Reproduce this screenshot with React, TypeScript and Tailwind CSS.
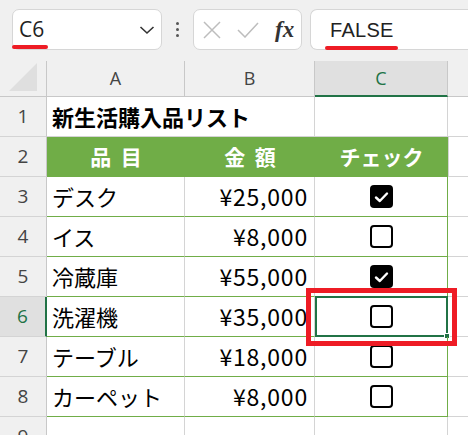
import React from "react";

const jp = { fontFamily: '"Noto Sans CJK JP", "Noto Sans", sans-serif' };
const ui = { fontFamily: '"Open Sans", "Liberation Sans", sans-serif' };

type Item = { name: string; price: string; checked: boolean };

const items: Item[] = [
  { name: "デスク", price: "¥25,000", checked: true },
  { name: "イス", price: "¥8,000", checked: false },
  { name: "冷蔵庫", price: "¥55,000", checked: true },
  { name: "洗濯機", price: "¥35,000", checked: false },
  { name: "テーブル", price: "¥18,000", checked: false },
  { name: "カーペット", price: "¥8,000", checked: false },
];

function CheckBox({ checked }: { checked: boolean }) {
  if (checked) {
    return (
      <div className="w-[23px] h-[23px] rounded-[4px] bg-black flex items-center justify-center">
        <svg width="15" height="12" viewBox="0 0 15 12">
          <path d="M2 6.5 L5.8 10 L13 2.5" fill="none" stroke="white" strokeWidth="2.4" strokeLinecap="round" strokeLinejoin="round" />
        </svg>
      </div>
    );
  }
  return <div className="w-[23px] h-[23px] rounded-[4px] border-2 border-black bg-white" />;
}

function RowHead({ n, active }: { n: number; active?: boolean }) {
  return (
    <div
      style={ui}
      className={
        "w-[47px] shrink-0 flex items-center justify-center text-[19px] border-b border-[#d4d4d4] " +
        (active
          ? "bg-[#e0e0e0] text-[#217346] border-r-2 border-r-[#217346]"
          : "bg-[#f0f0f0] text-[#444] border-r border-r-[#c8c8c8]")
      }
    >
      {n}
    </div>
  );
}

export default function App() {
  return (
    <div className="relative w-[468px] h-[435px] overflow-hidden bg-white">
      {/* toolbar: name box + formula bar */}
      <div className="h-[61px] bg-[#f0f0f0] flex items-start pt-[9px] pl-[12px] gap-0">
        <div className="w-[150px] h-[41px] bg-white border border-[#d6d6d6] rounded-[7px] flex items-center justify-between pl-[6px] pr-[6px]">
          <span style={ui} className="text-[21px] text-[#222] leading-none">C6</span>
          <svg width="16" height="10" viewBox="0 0 16 10">
            <path d="M1.5 2 L8 8 L14.5 2" fill="none" stroke="#333" strokeWidth="1.6" />
          </svg>
        </div>
        <div className="w-[31px] h-[41px] flex flex-col items-center justify-center gap-[3px]">
          <div className="w-[3px] h-[3px] bg-[#555] rounded-full" />
          <div className="w-[3px] h-[3px] bg-[#555] rounded-full" />
          <div className="w-[3px] h-[3px] bg-[#555] rounded-full" />
        </div>
        <div className="w-[109px] h-[41px] bg-white border border-[#d6d6d6] rounded-[7px] flex items-center pl-[9px]">
          <svg width="18" height="18" viewBox="0 0 18 18">
            <path d="M1 1 L17 17 M17 1 L1 17" stroke="#bdbdbd" strokeWidth="1.5" />
          </svg>
          <svg className="ml-[16px]" width="22" height="16" viewBox="0 0 22 16">
            <path d="M1 8 L8 15 L21 1" fill="none" stroke="#bdbdbd" strokeWidth="1.5" />
          </svg>
          <span
            className="ml-[16px] text-[23px] italic font-bold text-[#333] leading-none"
            style={{ fontFamily: '"Liberation Serif", serif' }}
          >
            fx
          </span>
        </div>
        <div className="ml-[8px] flex-1 h-[41px] bg-white border border-r-0 border-[#d6d6d6] rounded-l-[7px] flex items-center pl-[19px]">
          <span style={{ fontFamily: '"Liberation Sans", sans-serif' }} className="text-[20px] text-[#222] tracking-[0.3px] leading-none">
            FALSE
          </span>
        </div>
      </div>

      {/* column headings */}
      <div style={ui} className="flex h-[36px] text-[18px] text-[#444]">
        <div className="w-[47px] shrink-0 bg-[#f0f0f0] border-r border-b border-[#c8c8c8] flex items-end justify-center pb-[4px]">
          <svg width="30" height="30" viewBox="0 0 30 30">
            <path d="M29 1 L29 29 L1 29 Z" fill="#dfdfdf" />
          </svg>
        </div>
        <div className="w-[138px] shrink-0 bg-[#f0f0f0] border-r border-b border-[#c8c8c8] flex items-center justify-center">A</div>
        <div className="w-[130px] shrink-0 bg-[#f0f0f0] border-r border-b border-[#c8c8c8] flex items-center justify-center">B</div>
        <div className="w-[133px] shrink-0 bg-[#e0e0e0] border-r border-r-[#c8c8c8] border-b-2 border-b-[#217346] flex items-center justify-center text-[#217346]">C</div>
        <div className="flex-1 bg-[#f0f0f0] border-b border-[#c8c8c8]" />
      </div>

      {/* row 1: title */}
      <div className="flex h-[40px]">
        <RowHead n={1} />
        <div style={jp} className="w-[268px] shrink-0 border-r border-b border-[#d4d4d4] flex items-center pl-[5px] text-[22px] font-bold text-black whitespace-nowrap">
          新生活購入品リスト
        </div>
        <div className="w-[133px] shrink-0 border-r border-b border-[#d4d4d4]" />
        <div className="flex-1 border-b border-[#d4d4d4]" />
      </div>

      {/* row 2: table heading */}
      <div className="flex h-[40px]">
        <RowHead n={2} />
        <div style={jp} className="w-[401px] shrink-0 flex bg-[#70ad47] text-white font-bold text-[21px]">
          <div className="w-[138px] flex items-center justify-center">品&nbsp;&nbsp;目</div>
          <div className="w-[130px] flex items-center justify-center">金&nbsp;&nbsp;額</div>
          <div className="w-[133px] flex items-center justify-center">チェック</div>
        </div>
        <div className="flex-1 border-l border-b border-[#d4d4d4]" />
      </div>

      {/* item rows */}
      {items.map((it, i) => (
        <div key={it.name} className="flex h-[40px]">
          <RowHead n={i + 3} active={i === 3} />
          <div style={jp} className="w-[138px] shrink-0 border-r border-r-[#d4d4d4] border-b border-b-[#70ad47] flex items-center pl-[5px] text-[22px] text-black whitespace-nowrap">
            {it.name}
          </div>
          <div style={jp} className="w-[130px] shrink-0 border-r border-r-[#d4d4d4] border-b border-b-[#70ad47] flex items-center justify-end pr-[6px] text-[23px] text-black tracking-[0.8px]">
            {it.price}
          </div>
          <div className="relative w-[133px] shrink-0 border-r border-r-[#70ad47] border-b border-b-[#70ad47] flex items-center justify-center">
            <CheckBox checked={it.checked} />
            {i === 3 && (
              <div className="absolute left-0 top-[-1px] w-[133px] h-[41px] border-2 border-[#217346]">
                <div className="absolute right-[-4px] bottom-[-4px] w-[6px] h-[6px] bg-[#217346] border border-white" />
              </div>
            )}
          </div>
          <div className="flex-1 border-b border-[#d4d4d4]" />
        </div>
      ))}

      {/* row 9 */}
      <div className="flex h-[40px]">
        <RowHead n={9} />
        <div className="w-[138px] shrink-0 border-r border-[#d4d4d4]" />
        <div className="w-[130px] shrink-0 border-r border-[#d4d4d4]" />
        <div className="w-[133px] shrink-0 border-r border-[#d4d4d4]" />
      </div>

      {/* red annotations */}
      <div className="absolute left-[12px] top-[45px] w-[36px] h-[4px] rounded-full bg-[#ee1c25]" />
      <div className="absolute left-[325px] top-[46px] w-[73px] h-[4px] rounded-full bg-[#ee1c25]" />
      <div className="absolute left-[306px] top-[288px] w-[151px] h-[58px] border-[5px] border-[#ee1c25]" />
    </div>
  );
}
